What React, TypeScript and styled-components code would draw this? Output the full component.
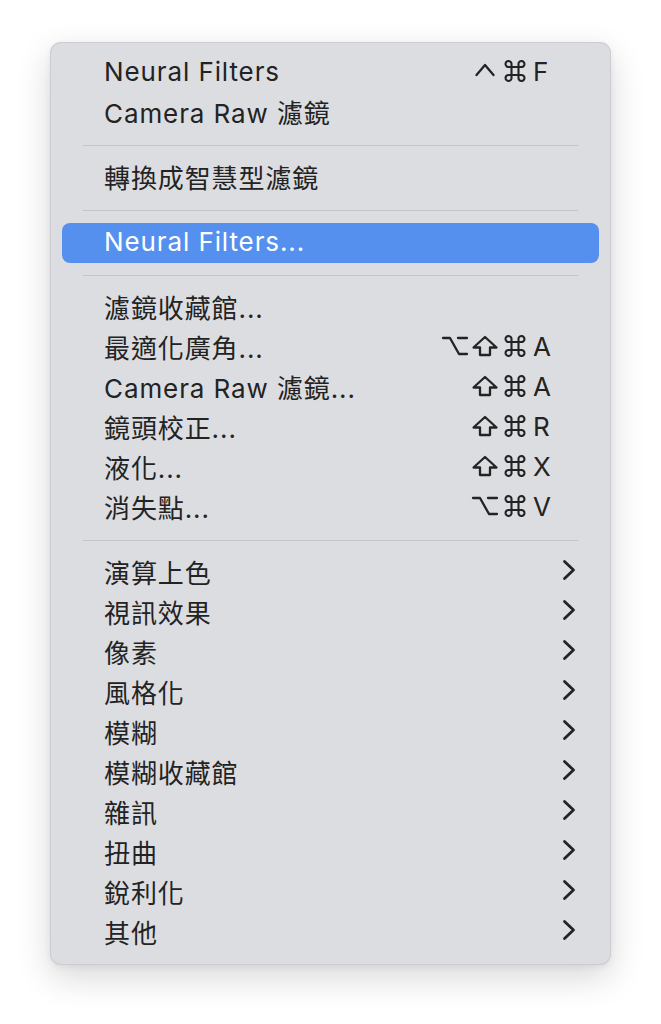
import styled, { createGlobalStyle } from "styled-components";

const GlobalStyle = createGlobalStyle`
  html, body {
    margin: 0;
    padding: 0;
    background: #ffffff;
  }
  body {
    font-family: "Inter", "Noto Sans CJK TC", sans-serif;
  }
`;

type Mod = "ctrl" | "opt" | "shift" | "cmd";

type Item =
  | { kind: "item"; label: string; mods?: Mod[]; keyChar?: string; active?: boolean; sub?: boolean }
  | { kind: "sep" };

const items: Item[] = [
  { kind: "item", label: "Neural Filters", mods: ["ctrl", "cmd"], keyChar: "F" },
  { kind: "item", label: "Camera Raw 濾鏡" },
  { kind: "sep" },
  { kind: "item", label: "轉換成智慧型濾鏡" },
  { kind: "sep" },
  { kind: "item", label: "Neural Filters...", active: true },
  { kind: "sep" },
  { kind: "item", label: "濾鏡收藏館..." },
  { kind: "item", label: "最適化廣角...", mods: ["opt", "shift", "cmd"], keyChar: "A" },
  { kind: "item", label: "Camera Raw 濾鏡...", mods: ["shift", "cmd"], keyChar: "A" },
  { kind: "item", label: "鏡頭校正...", mods: ["shift", "cmd"], keyChar: "R" },
  { kind: "item", label: "液化...", mods: ["shift", "cmd"], keyChar: "X" },
  { kind: "item", label: "消失點...", mods: ["opt", "cmd"], keyChar: "V" },
  { kind: "sep" },
  { kind: "item", label: "演算上色", sub: true },
  { kind: "item", label: "視訊效果", sub: true },
  { kind: "item", label: "像素", sub: true },
  { kind: "item", label: "風格化", sub: true },
  { kind: "item", label: "模糊", sub: true },
  { kind: "item", label: "模糊收藏館", sub: true },
  { kind: "item", label: "雜訊", sub: true },
  { kind: "item", label: "扭曲", sub: true },
  { kind: "item", label: "銳利化", sub: true },
  { kind: "item", label: "其他", sub: true },
];

// modifier key glyphs, drawn to match the macOS menu symbols
function ModIcon({ mod }: { mod: Mod }) {
  const common = {
    fill: "none",
    stroke: "currentColor",
    strokeWidth: 2.3,
    strokeLinecap: "round" as const,
    strokeLinejoin: "round" as const,
  };
  if (mod === "ctrl") {
    return (
      <svg width="22" height="22" viewBox="0 0 22 22">
        <path d="M2.5 15 L11 5 L19.5 15" {...common} />
      </svg>
    );
  }
  if (mod === "opt") {
    return (
      <svg width="28" height="22" viewBox="0 0 28 22">
        <path d="M2 3 H9 L18 19 H26" {...common} />
        <path d="M17 3 H26" {...common} />
      </svg>
    );
  }
  if (mod === "shift") {
    return (
      <svg width="28" height="22" viewBox="0 0 28 22">
        <path d="M14 2 L25.5 12.5 H19 V20 H9 V12.5 H2.5 Z" {...common} />
      </svg>
    );
  }
  return (
    <svg width="24" height="22" viewBox="0 0 24 22">
      <path
        d="M8.5 7 V15 M15.5 7 V15 M8.5 7 H15.5 M8.5 15 H15.5
           M8.5 7 H6 A3 3 0 1 1 8.5 4.3 Z
           M15.5 7 V4.5 A3 3 0 1 1 18 7 Z
           M15.5 15 H18 A3 3 0 1 1 15.5 17.7 Z
           M8.5 15 V17.5 A3 3 0 1 1 6 15 Z"
        {...common}
        strokeWidth={2.1}
      />
    </svg>
  );
}

function Chevron() {
  return (
    <svg width="14" height="22" viewBox="0 0 14 22" fill="none">
      <path
        d="M2.5 2.5 L11.5 11 L2.5 19.5"
        stroke="currentColor"
        strokeWidth="2.8"
        strokeLinecap="round"
        strokeLinejoin="round"
      />
    </svg>
  );
}

export default function App() {
  return (
    <>
      <GlobalStyle />
      <Page>
        <Menu>
          {items.map((item, i) =>
            item.kind === "sep" ? (
              <Separator key={i} />
            ) : (
              <Row key={i} $active={item.active}>
                <Label>{item.label}</Label>
                {item.mods && (
                  <Shortcut>
                    {item.mods.map((m) => (
                      <ModSlot key={m}>
                        <ModIcon mod={m} />
                      </ModSlot>
                    ))}
                    <KeyChar>{item.keyChar}</KeyChar>
                  </Shortcut>
                )}
                {item.sub && (
                  <Arrow>
                    <Chevron />
                  </Arrow>
                )}
              </Row>
            )
          )}
        </Menu>
      </Page>
    </>
  );
}

const Page = styled.div`
  width: 661px;
  min-height: 1024px;
  padding: 42px 0 0 50px;
  box-sizing: border-box;
`;

const Menu = styled.div`
  width: 561px;
  box-sizing: border-box;
  padding: 10px 11px 11px;
  background-color: #dcdde1;
  border-radius: 11px;
  border: 1px solid rgba(0, 0, 0, 0.07);
  box-shadow: 0 12px 34px rgba(0, 0, 0, 0.16), 0 2px 6px rgba(0, 0, 0, 0.06);
  display: flex;
  flex-direction: column;
`;

const Row = styled.div<{ $active?: boolean }>`
  height: 40px;
  box-sizing: border-box;
  display: flex;
  align-items: center;
  padding: 0 23px 4px 42px;
  border-radius: 8px;
  background-color: ${(p) => (p.$active ? "#5590ef" : "transparent")};
  color: ${(p) => (p.$active ? "#ffffff" : "#232323")};
  font-size: 26px;
  letter-spacing: 0.9px;
`;

const Label = styled.span`
  flex: 1;
  white-space: nowrap;
`;

const Shortcut = styled.span`
  display: flex;
  align-items: center;
  margin-right: 23px;
`;

const ModSlot = styled.span`
  width: 30px;
  height: 22px;
  display: flex;
  justify-content: center;
  align-items: center;
`;

const KeyChar = styled.span`
  width: 20px;
  margin-left: 3px;
  letter-spacing: 0;
`;

const Arrow = styled.span`
  display: flex;
  align-items: center;
  margin-top: -2px;
`;

const Separator = styled.div`
  height: 25px;
  display: flex;
  align-items: center;
  padding: 0 21px;

  &::after {
    content: "";
    flex: 1;
    height: 1.5px;
    background-color: #c3c4c8;
  }
`;
